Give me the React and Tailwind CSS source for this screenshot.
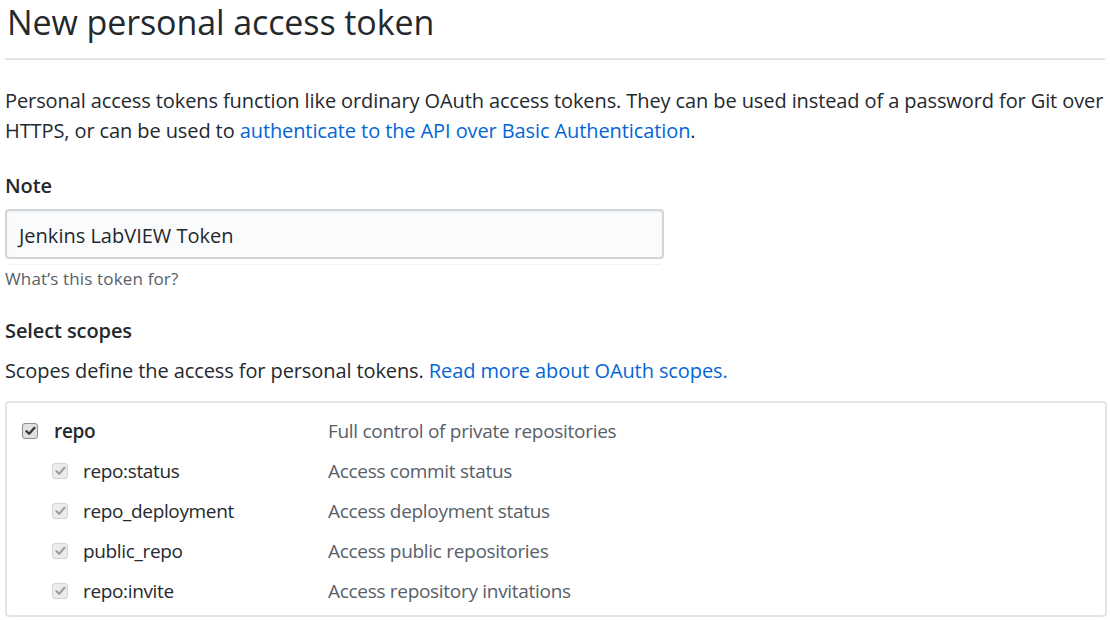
import React from "react";

function Check({ disabled }) {
  return (
    <span
      className={
        "flex h-[16px] w-[16px] items-center justify-center rounded-[3px] border " +
        (disabled ? "border-[#d4d4d4] bg-[#ececec]" : "border-[#8f8f8f] bg-[#e1e1e1]")
      }
    >
      <svg width="11" height="10" viewBox="0 0 11 10">
        <path
          d="M1.5 5.2 L4.2 7.8 L9.5 1.8"
          fill="none"
          stroke={disabled ? "#a0a0a0" : "#333333"}
          strokeWidth="2.2"
          strokeLinecap="round"
          strokeLinejoin="round"
        />
      </svg>
    </span>
  );
}

const subs = [
  ["repo:status", "Access commit status"],
  ["repo_deployment", "Access deployment status"],
  ["public_repo", "Access public repositories"],
  ["repo:invite", "Access repository invitations"],
];

export default function App() {
  return (
    <div
      className="h-[620px] w-[1110px] overflow-hidden bg-white text-[#24292e]"
      style={{ fontFamily: '"Open Sans", "Noto Sans", sans-serif' }}
    >
      <div className="px-[5px]">
        <div className="border-b-2 border-[#e1e4e8] pb-[14px]">
          <h1 className="pl-[2px] text-[34px] font-normal leading-[44px] tracking-[-0.1px]">
            New personal access token
          </h1>
        </div>

        <p className="mt-[26px] text-[20px] leading-[30px] tracking-[-0.1px]">
          Personal access tokens function like ordinary OAuth access tokens. They can be used instead of a password for Git over
          <br />
          HTTPS, or can be used to{" "}
          <a className="text-[#0366d6]">authenticate to the API over Basic Authentication</a>.
        </p>

        <div className="mt-[25px] text-[20px] font-semibold leading-[30px] tracking-[-0.1px]">Note</div>
        <div className="mt-[8px] flex h-[50px] w-[659px] items-center rounded-[4px] border-2 border-[#d1d5da] bg-[#fafbfc] pl-[12px] pt-[3px] text-[20px] tracking-[0px] shadow-[inset_0_1px_2px_rgba(27,31,35,0.075)]">
          Jenkins LabVIEW Token
        </div>
        <div className="mx-[3px] mt-[5px] h-px w-[652px] bg-[#eef4fb]" />
        <div className="mt-[2px] text-[17px] leading-[24px] tracking-[0.15px] text-[#586069]">What’s this token for?</div>

        <div className="mt-[25px] text-[20px] font-semibold leading-[30px] tracking-[-0.1px]">Select scopes</div>
        <p className="mt-[10px] text-[20px] leading-[30px] tracking-[-0.1px]">
          Scopes define the access for personal tokens.{" "}
          <a className="text-[#0366d6]">Read more about OAuth scopes.</a>
        </p>

        <div className="mt-[15px] h-[216px] w-[1102px] rounded-[4px] border-2 border-[#e1e4e8] pt-[13px]">
          <div className="flex h-[30px] items-center">
            <div className="flex w-[321px] items-center pl-[15px]">
              <Check />
              <span className="ml-[16px] text-[19px] font-semibold tracking-[-0.3px]">repo</span>
            </div>
            <span className="text-[19px] tracking-[-0.3px] text-[#586069]">Full control of private repositories</span>
          </div>
          {subs.map(([k, d]) => (
            <div key={k} className="mt-[10px] flex h-[30px] items-center">
              <div className="flex w-[321px] items-center pl-[45px]">
                <Check disabled />
                <span className="ml-[15px] text-[19px] tracking-[-0.35px]">{k}</span>
              </div>
              <span className="text-[19px] tracking-[-0.3px] text-[#586069]">{d}</span>
            </div>
          ))}
        </div>
      </div>
    </div>
  );
}
